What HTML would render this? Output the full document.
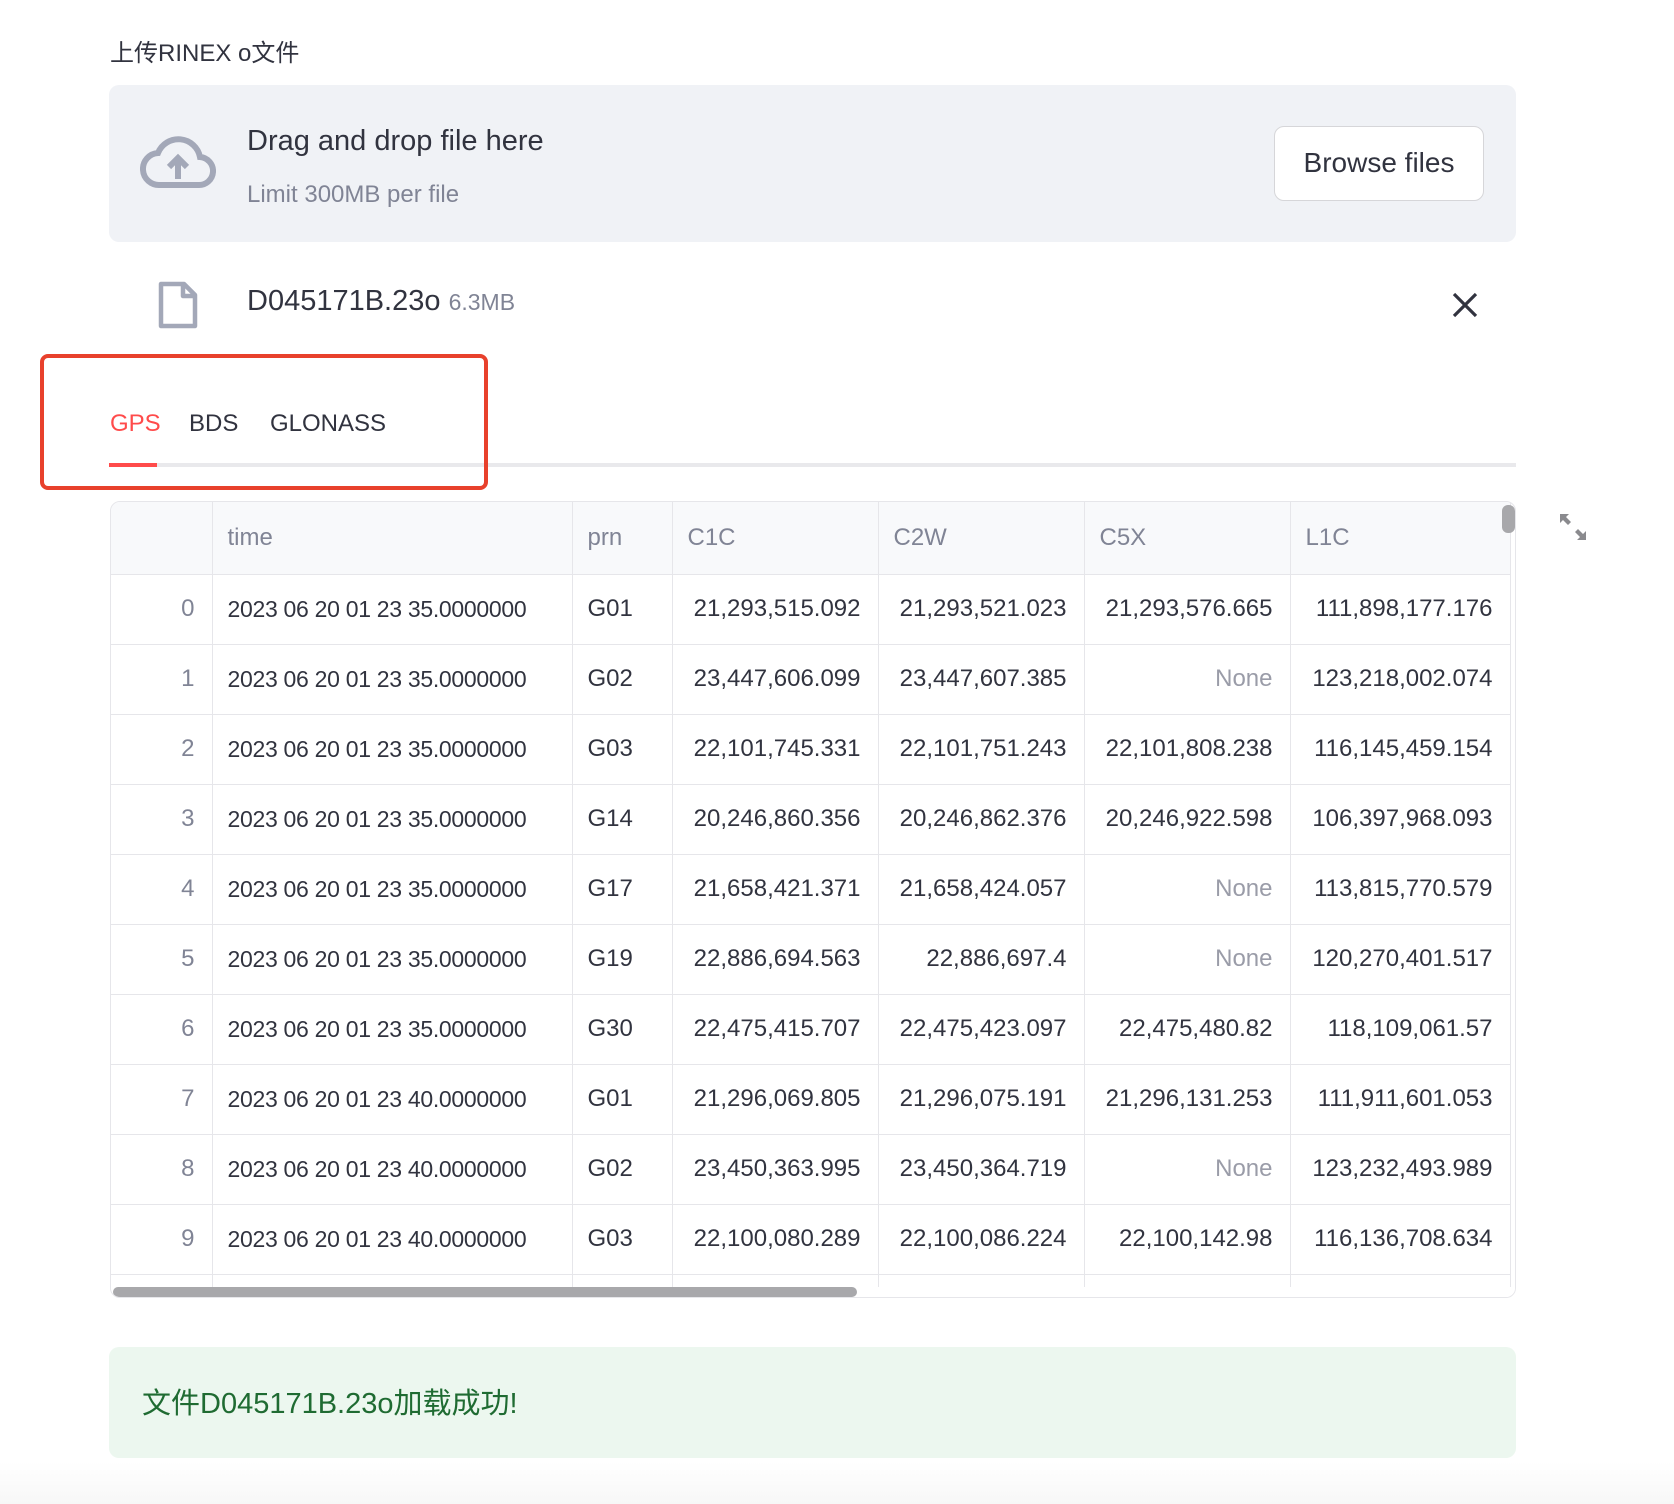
<!DOCTYPE html>
<html><head><meta charset="utf-8"><style>
*{box-sizing:border-box;margin:0;padding:0}
body{width:1674px;height:1504px;background:#fff;font-family:"Liberation Sans","Noto Sans CJK SC",sans-serif;color:#31333f;position:relative;overflow:hidden}
.a{position:absolute;white-space:nowrap}
.tbl{position:absolute;left:110px;top:501px;width:1406px;height:797px;border:1.5px solid #e6e6ea;border-radius:10px;overflow:hidden}
table{border-collapse:collapse;table-layout:fixed;position:absolute;left:0;top:0}
td,th{border-right:1.5px solid #e6e6ea;border-bottom:1.5px solid #e6e6ea;height:70px;font-size:24px;font-weight:normal;padding:0 17px 0 15px;text-align:right;overflow:hidden;white-space:nowrap}
th{height:72px;background:#f8f9fb;color:#808495;text-align:left}
td.n{color:#9a9ca8}
td.l{text-align:left}
td.t{font-size:23px;letter-spacing:-0.3px}
tr td:first-child{color:#808495}
</style></head><body>
<div class="a" style="left:110px;top:33px;font-size:24px">上传RINEX o文件</div>
<div class="a" style="left:109px;top:85px;width:1407px;height:157px;background:#f0f2f6;border-radius:10px"></div>
<svg class="a" style="left:140px;top:135px" width="76" height="56" viewBox="0 0 76 56"><path d="M20 50 H58 A14 14 0 0 0 60 22 A22 22 0 0 0 18 18 A16 16 0 0 0 20 50 Z" fill="none" stroke="#a3a8b8" stroke-width="6"/><path d="M38 44 V24 M29 32 L38 23 L47 32" fill="none" stroke="#a3a8b8" stroke-width="6"/></svg>
<div class="a" style="left:247px;top:125px;font-size:29px">Drag and drop file here</div>
<div class="a" style="left:247px;top:181px;font-size:24px;color:#808495">Limit 300MB per file</div>
<div class="a" style="left:1274px;top:126px;width:210px;height:75px;border:1.5px solid #d6d6d9;border-radius:10px;background:#fff;font-size:28px;text-align:center;line-height:72px">Browse files</div>
<svg class="a" style="left:158px;top:281px" width="40" height="48" viewBox="0 0 40 48"><path d="M3 3 H26 L37 14 V45 H3 Z M25 3 V15 H37" fill="none" stroke="#a3a8b8" stroke-width="4.5" stroke-linejoin="round"/></svg>
<div class="a" style="left:247px;top:285px;font-size:29px">D045171B.23o <span style="font-size:23px;color:#808495">6.3MB</span></div>
<svg class="a" style="left:1452px;top:292px" width="26" height="26" viewBox="0 0 26 26"><path d="M2 2 L24 24 M24 2 L2 24" stroke="#31333f" stroke-width="3.2"/></svg>
<div class="a" style="left:110px;top:410px;font-size:24px;color:#ff4b4b">GPS</div>
<div class="a" style="left:189px;top:410px;font-size:24px">BDS</div>
<div class="a" style="left:270px;top:410px;font-size:24px">GLONASS</div>
<div class="a" style="left:109px;top:463px;width:1407px;height:4px;background:#e9e9ec"></div>
<div class="a" style="left:109px;top:463px;width:48px;height:4px;background:#ff4b4b"></div>
<div class="a" style="left:40px;top:354px;width:448px;height:136px;border:4px solid #e8412c;border-radius:8px"></div>
<div class="tbl"><table>
<colgroup><col style="width:101px"><col style="width:360px"><col style="width:100px"><col style="width:206px"><col style="width:206px"><col style="width:206px"><col style="width:220px"></colgroup>
<tr><th></th><th>time</th><th>prn</th><th>C1C</th><th>C2W</th><th>C5X</th><th>L1C</th></tr>
<tr><td>0</td><td class="l t">2023 06 20 01 23 35.0000000</td><td class="l">G01</td><td>21,293,515.092</td><td>21,293,521.023</td><td>21,293,576.665</td><td>111,898,177.176</td></tr>
<tr><td>1</td><td class="l t">2023 06 20 01 23 35.0000000</td><td class="l">G02</td><td>23,447,606.099</td><td>23,447,607.385</td><td class="n">None</td><td>123,218,002.074</td></tr>
<tr><td>2</td><td class="l t">2023 06 20 01 23 35.0000000</td><td class="l">G03</td><td>22,101,745.331</td><td>22,101,751.243</td><td>22,101,808.238</td><td>116,145,459.154</td></tr>
<tr><td>3</td><td class="l t">2023 06 20 01 23 35.0000000</td><td class="l">G14</td><td>20,246,860.356</td><td>20,246,862.376</td><td>20,246,922.598</td><td>106,397,968.093</td></tr>
<tr><td>4</td><td class="l t">2023 06 20 01 23 35.0000000</td><td class="l">G17</td><td>21,658,421.371</td><td>21,658,424.057</td><td class="n">None</td><td>113,815,770.579</td></tr>
<tr><td>5</td><td class="l t">2023 06 20 01 23 35.0000000</td><td class="l">G19</td><td>22,886,694.563</td><td>22,886,697.4</td><td class="n">None</td><td>120,270,401.517</td></tr>
<tr><td>6</td><td class="l t">2023 06 20 01 23 35.0000000</td><td class="l">G30</td><td>22,475,415.707</td><td>22,475,423.097</td><td>22,475,480.82</td><td>118,109,061.57</td></tr>
<tr><td>7</td><td class="l t">2023 06 20 01 23 40.0000000</td><td class="l">G01</td><td>21,296,069.805</td><td>21,296,075.191</td><td>21,296,131.253</td><td>111,911,601.053</td></tr>
<tr><td>8</td><td class="l t">2023 06 20 01 23 40.0000000</td><td class="l">G02</td><td>23,450,363.995</td><td>23,450,364.719</td><td class="n">None</td><td>123,232,493.989</td></tr>
<tr><td>9</td><td class="l t">2023 06 20 01 23 40.0000000</td><td class="l">G03</td><td>22,100,080.289</td><td>22,100,086.224</td><td>22,100,142.98</td><td>116,136,708.634</td></tr>
<tr><td></td><td></td><td></td><td></td><td></td><td></td><td></td></tr>
</table>
<div style="position:absolute;left:0;top:785px;width:1406px;height:12px;background:#fff"></div>
<div style="position:absolute;left:2px;top:785px;width:744px;height:10px;background:#a8a8ab;border-radius:5px"></div>
<div style="position:absolute;left:1391px;top:3px;width:13px;height:28px;background:#a8a8ab;border-radius:6px"></div>
</div>
<svg class="a" style="left:1558px;top:512px" width="30" height="30" viewBox="0 0 30 30"><path d="M2 2 H11 L8 5 L13 10 L10 13 L5 8 L2 11 Z M28 28 H19 L22 25 L17 20 L20 17 L25 22 L28 19 Z" fill="#8a8a8e"/></svg>
<div class="a" style="left:109px;top:1347px;width:1407px;height:111px;background:#ecf7ef;border-radius:10px"></div>
<div class="a" style="left:142px;top:1380px;font-size:29px;color:#1f6b32">文件D045171B.23o加载成功!</div>
<div class="a" style="left:0;top:1462px;width:1674px;height:42px;background:linear-gradient(#fff,#f7f7f7)"></div>
</body></html>
